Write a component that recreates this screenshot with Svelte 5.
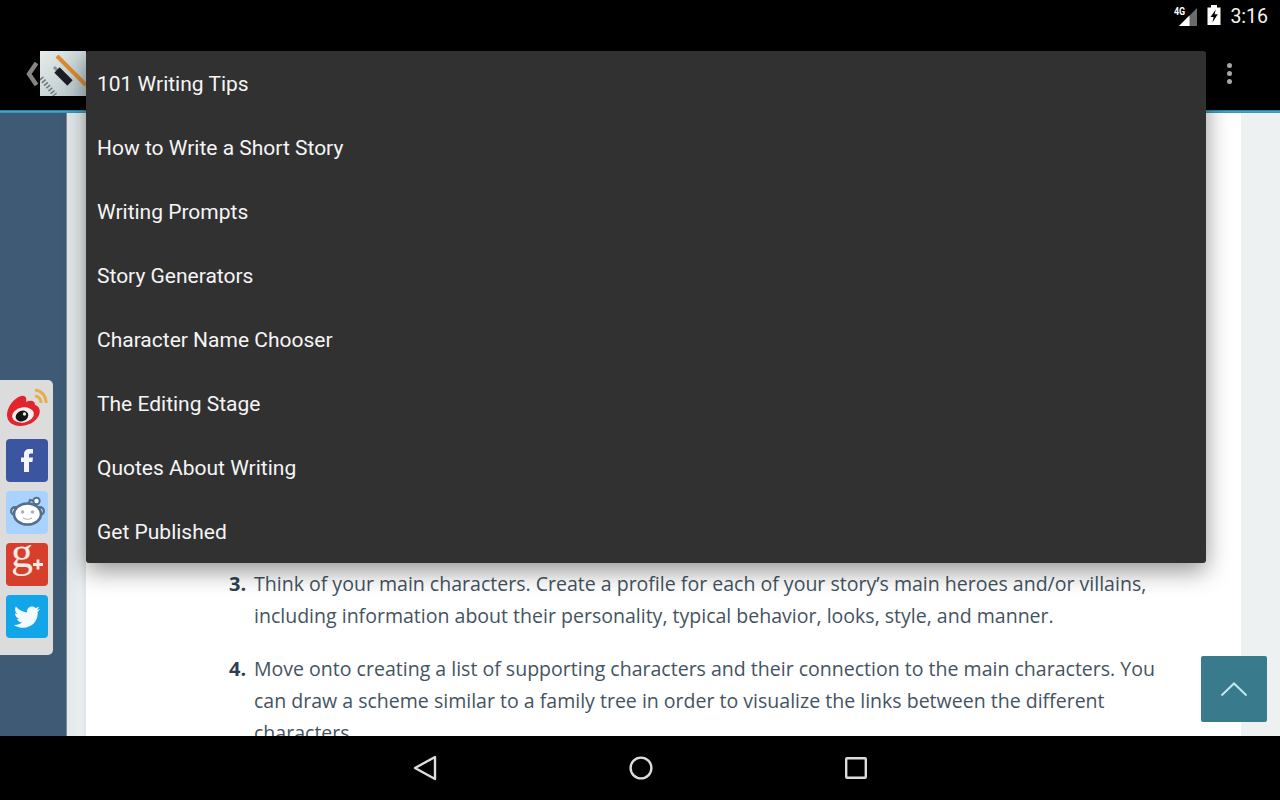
<script>
  const menuItems = [
    '101 Writing Tips',
    'How to Write a Short Story',
    'Writing Prompts',
    'Story Generators',
    'Character Name Chooser',
    'The Editing Stage',
    'Quotes About Writing',
    'Get Published'
  ];

  const steps = [
    {
      num: '3.',
      lines: [
        'Think of your main characters. Create a profile for each of your story’s main heroes and/or villains,',
        'including information about their personality, typical behavior, looks, style, and manner.'
      ]
    },
    {
      num: '4.',
      lines: [
        'Move onto creating a list of supporting characters and their connection to the main characters. You',
        'can draw a scheme similar to a family tree in order to visualize the links between the different',
        'characters.'
      ]
    }
  ];
</script>

<div class="screen">
  <div class="status">
    <span class="net">4G</span>
    <svg class="signal" width="18" height="18" viewBox="0 0 18 18">
      <path d="M18 0V18H0Z" fill="#6a6a6a" />
      <path d="M10.5 7.5V18H0Z" fill="#fff" />
    </svg>
    <svg class="battery" width="14" height="20" viewBox="0 0 14 20">
      <path d="M4 0H10V2.5H13.5V20H0.5V2.5H4Z" fill="#fff" />
      <path d="M8.8 4.5L3.5 12H6.6L5.4 17.5L10.8 9.2H7.6Z" fill="#000" />
    </svg>
    <span class="time">3:16</span>
  </div>

  <div class="actionbar">
    <svg class="up" width="14" height="28" viewBox="0 0 14 28">
      <path d="M11.5 3L4 14L11.5 25" fill="none" stroke="#858585" stroke-width="4.4" />
    </svg>
    <div class="logo">
      <svg width="46" height="45" viewBox="0 0 46 45">
        <defs>
          <linearGradient id="paper" x1="0" y1="0" x2="1" y2="1">
            <stop offset="0" stop-color="#e6ecea" />
            <stop offset="1" stop-color="#b4c4ca" />
          </linearGradient>
        </defs>
        <rect width="46" height="45" fill="url(#paper)" />
        <path d="M17 5L46 34" stroke="#dd8a30" stroke-width="4" />
        <path d="M14 16L18 20" stroke="#8a9296" stroke-width="3" />
        <path d="M17 19L30 32" stroke="#1b1f24" stroke-width="7.5" />
        <path d="M1 27L15 44" stroke="#6d7478" stroke-width="5" stroke-dasharray="1.5 2" />
      </svg>
    </div>
    <div class="overflow">
      <span></span><span></span><span></span>
    </div>
  </div>
  <div class="accent"></div>

  <div class="page">
    <div class="side"></div>
    <div class="gutter"></div>
    <main class="article">
      <ol class="steps">
        {#each steps as step}
          <li>
            <b>{step.num}</b>
            <p>
              {#each step.lines as line}
                <span>{line}</span>
              {/each}
            </p>
          </li>
        {/each}
      </ol>
    </main>
    <div class="rail"></div>
  </div>

  <div class="navbar">
    <svg width="24" height="26" viewBox="0 0 24 26">
      <path d="M22 2V24L2 13Z" fill="none" stroke="#ddd" stroke-width="2.4" stroke-linejoin="round" />
    </svg>
    <svg width="24" height="24" viewBox="0 0 24 24">
      <circle cx="12" cy="12" r="10.4" fill="none" stroke="#ddd" stroke-width="2.4" />
    </svg>
    <svg width="22" height="22" viewBox="0 0 22 22">
      <rect x="1.2" y="1.2" width="19.6" height="19.6" rx="1" fill="none" stroke="#ddd" stroke-width="2.4" />
    </svg>
  </div>

  <div class="social">
    <div class="share weibo">
      <svg width="42" height="43" viewBox="0 0 42 43">
        <path d="M29 3A12 12 0 0 1 40 16" fill="none" stroke="#e8ae4c" stroke-width="3.2" />
        <path d="M29 9A6.5 6.5 0 0 1 35 16" fill="none" stroke="#e8ae4c" stroke-width="3" />
        <path d="M1 28C1 20 8 11 15 9C20 8 21 12 20 15C24 13 29 13 29 18C33 19 35 23 33 28C30 35 22 39 14 39C7 39 1 35 1 28Z" fill="#e2242c" />
        <ellipse cx="17" cy="28" rx="11" ry="7.5" fill="#f2f0ee" transform="rotate(-10 17 28)" />
        <ellipse cx="16" cy="29" rx="6.5" ry="5.2" fill="#141414" transform="rotate(-25 16 29)" />
        <circle cx="18.5" cy="27" r="1.7" fill="#e8e8e8" />
      </svg>
    </div>
    <div class="share fb">
      <svg width="42" height="43" viewBox="0 0 42 43">
        <path d="M18 33V23H15V18.5H18V15.5C18 12 20 10 23.5 10H27V14.5H25C23.5 14.5 23 15 23 16.5V18.5H27L26.4 23H23V33Z" fill="#f4f5f9" />
      </svg>
    </div>
    <div class="share reddit">
      <svg width="42" height="43" viewBox="0 0 42 43">
        <circle cx="9" cy="20" r="3.8" fill="#fff" stroke="#54708c" stroke-width="2.4" />
        <circle cx="34" cy="20" r="3.8" fill="#fff" stroke="#54708c" stroke-width="2.4" />
        <path d="M22 14L24 9L29 10" fill="none" stroke="#54708c" stroke-width="2" />
        <circle cx="30.5" cy="10" r="3.2" fill="#fff" stroke="#54708c" stroke-width="2" />
        <ellipse cx="21.5" cy="23" rx="13.5" ry="10.5" fill="#fff" stroke="#54708c" stroke-width="2.6" />
        <circle cx="16.5" cy="21" r="1.8" fill="#a4b4c4" />
        <circle cx="26.5" cy="21" r="1.8" fill="#a4b4c4" />
        <path d="M17 27Q21.5 29.5 26 27" fill="none" stroke="#a4b4c4" stroke-width="1.2" />
      </svg>
    </div>
    <div class="share gplus">
      <svg width="42" height="43" viewBox="0 0 42 43">
        <text class="gplus-g" x="5" y="24">g</text>
        <path d="M27 21.5H37M32 16.5V26.5" stroke="#f7e9e3" stroke-width="2.8" />
      </svg>
    </div>
    <div class="share tw">
      <svg width="42" height="43" viewBox="0 0 42 43">
        <path d="M34 14C33 14.5 31.8 14.8 30.6 15C31.8 14.2 32.8 13 33.2 11.6C32 12.3 30.8 12.8 29.4 13.1C26.2 9.7 20.2 12.5 21.2 17.4C16.6 17.1 12.5 14.9 9.8 11.6C8.4 14.1 9 17.3 11.5 19C10.6 19 9.7 18.7 9 18.3C9 20.9 10.8 23.2 13.4 23.7C12.6 23.9 11.7 24 10.9 23.8C11.6 26 13.6 27.5 16 27.6C13.7 29.5 10.8 30.3 7.8 30C19 37 32.6 30.2 31.7 16.8C32.6 16 33.4 15.1 34 14Z" fill="#f4fbff" />
      </svg>
    </div>
  </div>

  <div class="to-top">
    <svg width="28" height="16" viewBox="0 0 28 16">
      <path d="M1.5 14.5L14 2.5L26.5 14.5" fill="none" stroke="#c4e6ee" stroke-width="2" />
    </svg>
  </div>

  <ul class="menu">
    {#each menuItems as item}
      <li>{item}</li>
    {/each}
  </ul>
</div>

<style>
  :global(body) {
    margin: 0;
    background: #000;
  }

  .screen {
    position: relative;
    width: 1280px;
    height: 800px;
    overflow: hidden;
    display: flex;
    flex-direction: column;
    background: #000;
    font-family: Roboto, "Liberation Sans", sans-serif;
  }

  .status {
    height: 34px;
    display: flex;
    align-items: center;
    justify-content: flex-end;
    padding-right: 12px;
    color: #fff;
  }

  .net {
    font-size: 10.5px;
    font-weight: 700;
    margin-right: -7px;
    margin-top: -11px;
    transform: scaleX(0.85);
  }

  .signal {
    margin-right: 10px;
    margin-top: -1px;
  }

  .battery {
    margin-right: 9px;
    margin-top: -4px;
  }

  .time {
    font-size: 19.5px;
    line-height: 34px;
    color: #f4f4f4;
  }

  .actionbar {
    height: 76px;
    box-sizing: border-box;
    padding: 3px 48px 0 25px;
    display: flex;
    align-items: center;
  }

  .up {
    margin-right: 1px;
  }

  .logo {
    width: 46px;
    height: 45px;
    overflow: hidden;
  }

  .overflow {
    margin-left: auto;
    display: flex;
    flex-direction: column;
    gap: 3px;
  }

  .overflow span {
    width: 5px;
    height: 5px;
    border-radius: 50%;
    background: #a8a8a8;
  }

  .accent {
    height: 3px;
    background: linear-gradient(#1f7290, #3fa8cc, #2f8fb2);
  }

  .page {
    flex: 1;
    min-height: 0;
    display: flex;
  }

  .side {
    width: 66px;
    background: #3f5a75;
    border-right: 1px solid #7c8a96;
  }

  .gutter {
    width: 19px;
    background: linear-gradient(90deg, #e2e7ea, #e9eef0 70%, #dfe4e4);
  }

  .article {
    flex: 1;
    background: #fff;
    overflow: hidden;
    padding: 455px 0 0 143px;
    font-family: "Open Sans", "Noto Sans", sans-serif;
    color: #44535f;
  }

  .rail {
    width: 39px;
    background: #edf1f2;
  }

  .steps {
    list-style: none;
    margin: 0;
    padding: 0;
    display: flex;
    flex-direction: column;
    gap: 21px;
  }

  .steps li {
    display: flex;
    font-size: 20px;
    line-height: 32px;
    white-space: nowrap;
  }

  .steps b {
    width: 25px;
    color: #2e3f50;
    font-weight: 700;
    flex: none;
  }

  .steps p {
    margin: 0;
    display: flex;
    flex-direction: column;
    font-size: 19.55px;
  }

  .navbar {
    height: 64px;
    background: #000;
    display: flex;
    align-items: center;
    justify-content: center;
    gap: 192px;
  }

  .social {
    position: absolute;
    left: -6px;
    top: 380px;
    width: 59px;
    height: 275px;
    box-sizing: border-box;
    padding: 7px 5px 0 12px;
    background: #dcdcdc;
    border-radius: 5px;
    display: flex;
    flex-direction: column;
    gap: 9px;
  }

  .share {
    width: 42px;
    height: 43px;
    border-radius: 4px;
    display: flex;
    align-items: center;
    justify-content: center;
  }

  .fb {
    background: #3b55a0;
  }

  .reddit {
    background: #a9d3ff;
  }

  .gplus {
    background: #d63f2c;
  }

  .gplus-g {
    font-family: "Liberation Serif", serif;
    font-size: 44px;
    fill: #f7e9e3;
  }

  .tw {
    background: #12a6e8;
  }

  .to-top {
    position: absolute;
    left: 1201px;
    top: 656px;
    width: 66px;
    height: 66px;
    background: #397a8c;
    border-radius: 2px;
    display: flex;
    align-items: center;
    justify-content: center;
  }

  .menu {
    position: absolute;
    left: 86px;
    top: 51px;
    width: 1120px;
    height: 512px;
    margin: 0;
    padding: 0;
    list-style: none;
    background: #313131;
    border-radius: 3px;
    box-shadow: 0 8px 24px rgba(0, 0, 0, 0.42);
  }

  .menu li {
    height: 64px;
    line-height: 66px;
    padding-left: 11px;
    font-size: 21px;
    color: #f5f5f5;
  }
</style>
